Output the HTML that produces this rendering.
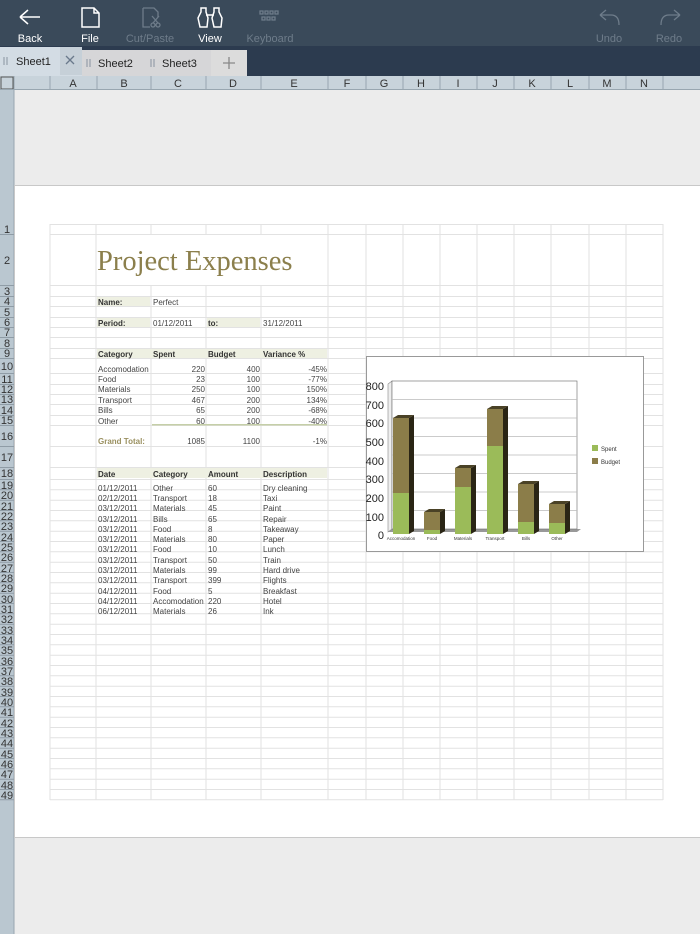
<!DOCTYPE html>
<html><head><meta charset="utf-8"><style>
body{margin:0;width:700px;height:934px;overflow:hidden;background:#ececec;font-family:"Liberation Sans",sans-serif;position:relative}
.a{position:absolute}
</style></head><body>
<div class="a" style="left:0;top:0;width:700px;height:46px;background:#3a4a5a"></div>
<div class="a" style="left:0;top:46px;width:700px;height:30px;background:#2c3b4f"></div>
<svg class="a" style="left:0;top:0" width="700" height="934" font-family="Liberation Sans, sans-serif">
<g stroke="#fff" fill="none" stroke-width="1.5">
<path d="M20 17 H40 M20 17 L28 10 M20 17 L28 24"/>
<path d="M82 8 H94 L99 13 V27 H82 Z M94 8 V13 H99"/>
<path d="M200 27 L198 18 L201 12 V8 H206 V12 L208 18 L207 27 Z M214 27 L212 18 L214 12 V8 H219 V12 L222 18 L221 27 Z M206 15 H214"/>
</g>
<g stroke="#6e7c8a" fill="none" stroke-width="1.3">
<path d="M143 8 H154 L158 12 V17 M143 8 V27 H150"/><circle cx="153" cy="25" r="2"/><circle cx="158" cy="25" r="2"/><path d="M152 16 L158 23 M159 16 L153 23"/>
<path d="M260 11h3v3h-3zM265 11h3v3h-3zM270 11h3v3h-3zM275 11h3v3h-3zM262 17h3v3h-3zM267 17h3v3h-3zM272 17h3v3h-3z"/>
<path d="M600 15 L606 10 M600 15 L606 20 M600 15 H611 Q619 15 619 25"/>
<path d="M680 15 L674 10 M680 15 L674 20 M680 15 H669 Q661 15 661 25"/>
</g>
<g font-size="11" text-anchor="middle">
<text x="30" y="42" fill="#fff">Back</text><text x="90" y="42" fill="#fff">File</text>
<text x="150" y="42" fill="#6e7c8a">Cut/Paste</text><text x="210" y="42" fill="#fff">View</text>
<text x="270" y="42" fill="#6e7c8a">Keyboard</text><text x="609" y="42" fill="#6e7c8a">Undo</text><text x="669" y="42" fill="#6e7c8a">Redo</text>
</g>
<rect x="0" y="47" width="82" height="29" fill="#d3dce4"/>
<rect x="60" y="47" width="22" height="28" fill="#c6d0d8"/>
<rect x="82" y="50" width="129" height="26" fill="#d6d6d8"/>
<rect x="211" y="50" width="36" height="26" fill="#dcdcdc"/>
<g font-size="11" fill="#222"><text x="16" y="65">Sheet1</text><text x="98" y="67">Sheet2</text><text x="162" y="67">Sheet3</text></g>
<g stroke="#8893a0" stroke-width="1"><path d="M4 57v8M7 57v8M87 59v8M90 59v8M151 59v8M154 59v8"/></g>
<path d="M66 56 L74 64 M74 56 L66 64" stroke="#6a7a8c" stroke-width="1.3"/>
<path d="M229 57v12M223 63h12" stroke="#888" stroke-width="1.3"/>
<rect x="0" y="76" width="700" height="14" fill="#c8d3db"/>
<rect x="1" y="77" width="12" height="12" fill="#c8d3db" stroke="#555"/>
<g stroke="#98a6b0"><path d="M14 76v14M50 76v14M97 76v14M151 76v14M206 76v14M261 76v14M328 76v14M366 76v14M403 76v14M440 76v14M477 76v14M514 76v14M551 76v14M589 76v14M626 76v14M663 76v14M0 89.5h700"/></g>
<g font-size="11" fill="#333" text-anchor="middle"><text x="73" y="87">A</text><text x="124" y="87">B</text><text x="178" y="87">C</text><text x="233" y="87">D</text><text x="294" y="87">E</text><text x="347" y="87">F</text><text x="384" y="87">G</text><text x="421" y="87">H</text><text x="458" y="87">I</text><text x="495" y="87">J</text><text x="532" y="87">K</text><text x="570" y="87">L</text><text x="607" y="87">M</text><text x="644" y="87">N</text></g>
<rect x="0" y="90" width="14" height="844" fill="#bac7d0"/>
<line x1="14" y1="90" x2="14" y2="934" stroke="#98a6b0"/>
<rect x="14.5" y="185.5" width="690" height="652" fill="#fff" stroke="#c8c8c8"/>
<g stroke="#e2e2e2" stroke-width="1">
<path d="M50 224V800M96 224V800M151 224V800M206 224V800M261 224V800M328 224V800M366 224V800M403 224V800M440 224V800M477 224V800M514 224V800M551 224V800M589 224V800M626 224V800M663 224V800"/>
<path d="M50 224.5H663M50 234.5H663M50 285.5H663M50 296.5H663M50 306.5H663M50 317.5H663M50 327.5H663M50 337.5H663M50 348.5H663M50 358.5H663M50 373.5H663M50 384.5H663M50 394.5H663M50 404.5H663M50 415.5H663M50 425.5H663M50 446.5H663M50 467.5H663M50 479.5H663M50 489.8H663M50 500.2H663M50 510.5H663M50 520.8H663M50 531.2H663M50 541.5H663M50 551.8H663M50 562.2H663M50 572.5H663M50 582.8H663M50 593.2H663M50 603.5H663M50 613.8H663M50 624.2H663M50 634.5H663M50 644.8H663M50 655.2H663M50 665.5H663M50 675.8H663M50 686.2H663M50 696.5H663M50 706.8H663M50 717.2H663M50 727.5H663M50 737.8H663M50 748.2H663M50 758.5H663M50 768.8H663M50 779.2H663M50 789.5H663M50 799.8H663"/>
</g>
<g stroke="#8f9ca6"><path d="M0 234.5h14M0 285.5h14M0 296.5h14M0 306.5h14M0 317.5h14M0 327.5h14M0 337.5h14M0 348.5h14M0 358.5h14M0 373.5h14M0 384.5h14M0 394.5h14M0 404.5h14M0 415.5h14M0 425.5h14M0 446.5h14M0 467.5h14M0 479.5h14M0 489.8h14M0 500.2h14M0 510.5h14M0 520.8h14M0 531.2h14M0 541.5h14M0 551.8h14M0 562.2h14M0 572.5h14M0 582.8h14M0 593.2h14M0 603.5h14M0 613.8h14M0 624.2h14M0 634.5h14M0 644.8h14M0 655.2h14M0 665.5h14M0 675.8h14M0 686.2h14M0 696.5h14M0 706.8h14M0 717.2h14M0 727.5h14M0 737.8h14M0 748.2h14M0 758.5h14M0 768.8h14M0 779.2h14M0 789.5h14M0 799.8h14"/></g>
<g font-size="11" fill="#333" text-anchor="middle">
<text x="7" y="233">1</text><text x="7" y="264">2</text><text x="7" y="295">3</text><text x="7" y="305">4</text><text x="7" y="316">5</text><text x="7" y="326">6</text><text x="7" y="336">7</text><text x="7" y="347">8</text><text x="7" y="357">9</text><text x="7" y="370">10</text><text x="7" y="383">11</text><text x="7" y="393">12</text><text x="7" y="403">13</text><text x="7" y="414">14</text><text x="7" y="424">15</text><text x="7" y="440">16</text><text x="7" y="461">17</text><text x="7" y="477">18</text>
<text x="7" y="489">19</text><text x="7" y="499">20</text><text x="7" y="510">21</text><text x="7" y="520">22</text><text x="7" y="530">23</text><text x="7" y="541">24</text><text x="7" y="551">25</text><text x="7" y="561">26</text><text x="7" y="572">27</text><text x="7" y="582">28</text><text x="7" y="592">29</text><text x="7" y="603">30</text><text x="7" y="613">31</text><text x="7" y="623">32</text><text x="7" y="634">33</text><text x="7" y="644">34</text><text x="7" y="654">35</text><text x="7" y="665">36</text><text x="7" y="675">37</text><text x="7" y="685">38</text><text x="7" y="696">39</text><text x="7" y="706">40</text><text x="7" y="716">41</text><text x="7" y="727">42</text><text x="7" y="737">43</text><text x="7" y="747">44</text><text x="7" y="758">45</text><text x="7" y="768">46</text><text x="7" y="778">47</text><text x="7" y="789">48</text><text x="7" y="799">49</text>
</g>
<rect x="97" y="235" width="230" height="50" fill="#fff"/>
<text x="97" y="270" font-family="Liberation Serif, serif" font-size="28.5" fill="#8b7f4c">Project Expenses</text>
<g fill="#eef0e2">
<rect x="97" y="297" width="53" height="9"/><rect x="97" y="318" width="53" height="9"/><rect x="207" y="318" width="53" height="9"/>
<rect x="97" y="349" width="230" height="9"/><rect x="97" y="468" width="230" height="10"/>
</g>
<rect x="152" y="424" width="175" height="1.5" fill="#c5cfa8"/>
<g font-size="8" fill="#444">
<g font-weight="bold" fill="#333"><text x="98" y="305">Name:</text><text x="98" y="326">Period:</text><text x="208" y="326">to:</text>
<text x="98" y="357">Category</text><text x="153" y="357">Spent</text><text x="208" y="357">Budget</text><text x="263" y="357">Variance %</text>
<text x="98" y="477">Date</text><text x="153" y="477">Category</text><text x="208" y="477">Amount</text><text x="263" y="477">Description</text></g>
<text x="153" y="305">Perfect</text><text x="153" y="326">01/12/2011</text><text x="263" y="326">31/12/2011</text>
<text x="98" y="372">Accomodation</text><text x="98" y="382">Food</text><text x="98" y="392">Materials</text><text x="98" y="403">Transport</text><text x="98" y="413">Bills</text><text x="98" y="424">Other</text>
<g text-anchor="end">
<text x="205" y="372">220</text><text x="205" y="382">23</text><text x="205" y="392">250</text><text x="205" y="403">467</text><text x="205" y="413">65</text><text x="205" y="424">60</text><text x="205" y="444">1085</text>
<text x="260" y="372">400</text><text x="260" y="382">100</text><text x="260" y="392">100</text><text x="260" y="403">200</text><text x="260" y="413">200</text><text x="260" y="424">100</text><text x="260" y="444">1100</text>
<text x="327" y="372">-45%</text><text x="327" y="382">-77%</text><text x="327" y="392">150%</text><text x="327" y="403">134%</text><text x="327" y="413">-68%</text><text x="327" y="424">-40%</text><text x="327" y="444">-1%</text>
</g>
<text x="98" y="444" font-weight="bold" fill="#9a9060">Grand Total:</text>
<g>
<text x="98" y="491">01/12/2011</text><text x="153" y="491">Other</text><text x="208" y="491">60</text><text x="263" y="491">Dry cleaning</text>
<text x="98" y="501">02/12/2011</text><text x="153" y="501">Transport</text><text x="208" y="501">18</text><text x="263" y="501">Taxi</text>
<text x="98" y="511">03/12/2011</text><text x="153" y="511">Materials</text><text x="208" y="511">45</text><text x="263" y="511">Paint</text>
<text x="98" y="522">03/12/2011</text><text x="153" y="522">Bills</text><text x="208" y="522">65</text><text x="263" y="522">Repair</text>
<text x="98" y="532">03/12/2011</text><text x="153" y="532">Food</text><text x="208" y="532">8</text><text x="263" y="532">Takeaway</text>
<text x="98" y="542">03/12/2011</text><text x="153" y="542">Materials</text><text x="208" y="542">80</text><text x="263" y="542">Paper</text>
<text x="98" y="552">03/12/2011</text><text x="153" y="552">Food</text><text x="208" y="552">10</text><text x="263" y="552">Lunch</text>
<text x="98" y="563">03/12/2011</text><text x="153" y="563">Transport</text><text x="208" y="563">50</text><text x="263" y="563">Train</text>
<text x="98" y="573">03/12/2011</text><text x="153" y="573">Materials</text><text x="208" y="573">99</text><text x="263" y="573">Hard drive</text>
<text x="98" y="583">03/12/2011</text><text x="153" y="583">Transport</text><text x="208" y="583">399</text><text x="263" y="583">Flights</text>
<text x="98" y="594">04/12/2011</text><text x="153" y="594">Food</text><text x="208" y="594">5</text><text x="263" y="594">Breakfast</text>
<text x="98" y="604">04/12/2011</text><text x="153" y="604">Accomodation</text><text x="208" y="604">220</text><text x="263" y="604">Hotel</text>
<text x="98" y="614">06/12/2011</text><text x="153" y="614">Materials</text><text x="208" y="614">26</text><text x="263" y="614">Ink</text>
</g>
</g>
<rect x="366.5" y="356.5" width="277" height="195" fill="#fff" stroke="#999"/>
<path d="M388 532 L392 529 L392 381 L388 384 Z" fill="#eee" stroke="#888" stroke-width="0.6"/>
<path d="M388 532 L577 532 L581 529 L392 529 Z" fill="#999"/>
<rect x="392" y="381" width="185" height="148" fill="#fff" stroke="#666" stroke-width="0.6"/>
<g stroke="#bbb" stroke-width="0.8"><path d="M392 399.5H577M392 418H577M392 436.5H577M392 455H577M392 473.5H577M392 492H577M392 510.5H577"/></g>
<g font-size="11" fill="#222" text-anchor="end"><text x="384" y="539">0</text><text x="384" y="521">100</text><text x="384" y="502">200</text><text x="384" y="483">300</text><text x="384" y="465">400</text><text x="384" y="446">500</text><text x="384" y="427">600</text><text x="384" y="409">700</text><text x="384" y="390">800</text></g>
<g>
<g><rect x="393" y="493" width="16" height="41" fill="#9bbb59"/><rect x="393" y="418" width="16" height="75" fill="#8b7d49"/><path d="M409 418l5-3v116l-5 3z" fill="#2a2515"/><path d="M393 418l5-3h16l-5 3z" fill="#4a4226"/></g>
<g><rect x="424" y="530" width="16" height="4" fill="#9bbb59"/><rect x="424" y="512" width="16" height="18" fill="#8b7d49"/><path d="M440 512l5-3v22l-5 3z" fill="#2a2515"/><path d="M424 512l5-3h16l-5 3z" fill="#4a4226"/></g>
<g><rect x="455" y="487" width="16" height="47" fill="#9bbb59"/><rect x="455" y="468" width="16" height="19" fill="#8b7d49"/><path d="M471 468l5-3v66l-5 3z" fill="#2a2515"/><path d="M455 468l5-3h16l-5 3z" fill="#4a4226"/></g>
<g><rect x="487" y="446" width="16" height="88" fill="#9bbb59"/><rect x="487" y="409" width="16" height="37" fill="#8b7d49"/><path d="M503 409l5-3v125l-5 3z" fill="#2a2515"/><path d="M487 409l5-3h16l-5 3z" fill="#4a4226"/></g>
<g><rect x="518" y="522" width="16" height="12" fill="#9bbb59"/><rect x="518" y="484" width="16" height="38" fill="#8b7d49"/><path d="M534 484l5-3v50l-5 3z" fill="#2a2515"/><path d="M518 484l5-3h16l-5 3z" fill="#4a4226"/></g>
<g><rect x="549" y="523" width="16" height="11" fill="#9bbb59"/><rect x="549" y="504" width="16" height="19" fill="#8b7d49"/><path d="M565 504l5-3v30l-5 3z" fill="#2a2515"/><path d="M549 504l5-3h16l-5 3z" fill="#4a4226"/></g>
</g>
<g font-size="4.5" fill="#333" text-anchor="middle"><text x="401" y="540">Accomodation</text><text x="432" y="540">Food</text><text x="463" y="540">Materials</text><text x="495" y="540">Transport</text><text x="526" y="540">Bills</text><text x="557" y="540">Other</text></g>
<rect x="592" y="445" width="6" height="6" fill="#9bbb59"/><rect x="592" y="458" width="6" height="6" fill="#8b7d49"/>
<g font-size="6" fill="#333"><text x="601" y="451">Spent</text><text x="601" y="464">Budget</text></g>
</svg>
</body></html>
